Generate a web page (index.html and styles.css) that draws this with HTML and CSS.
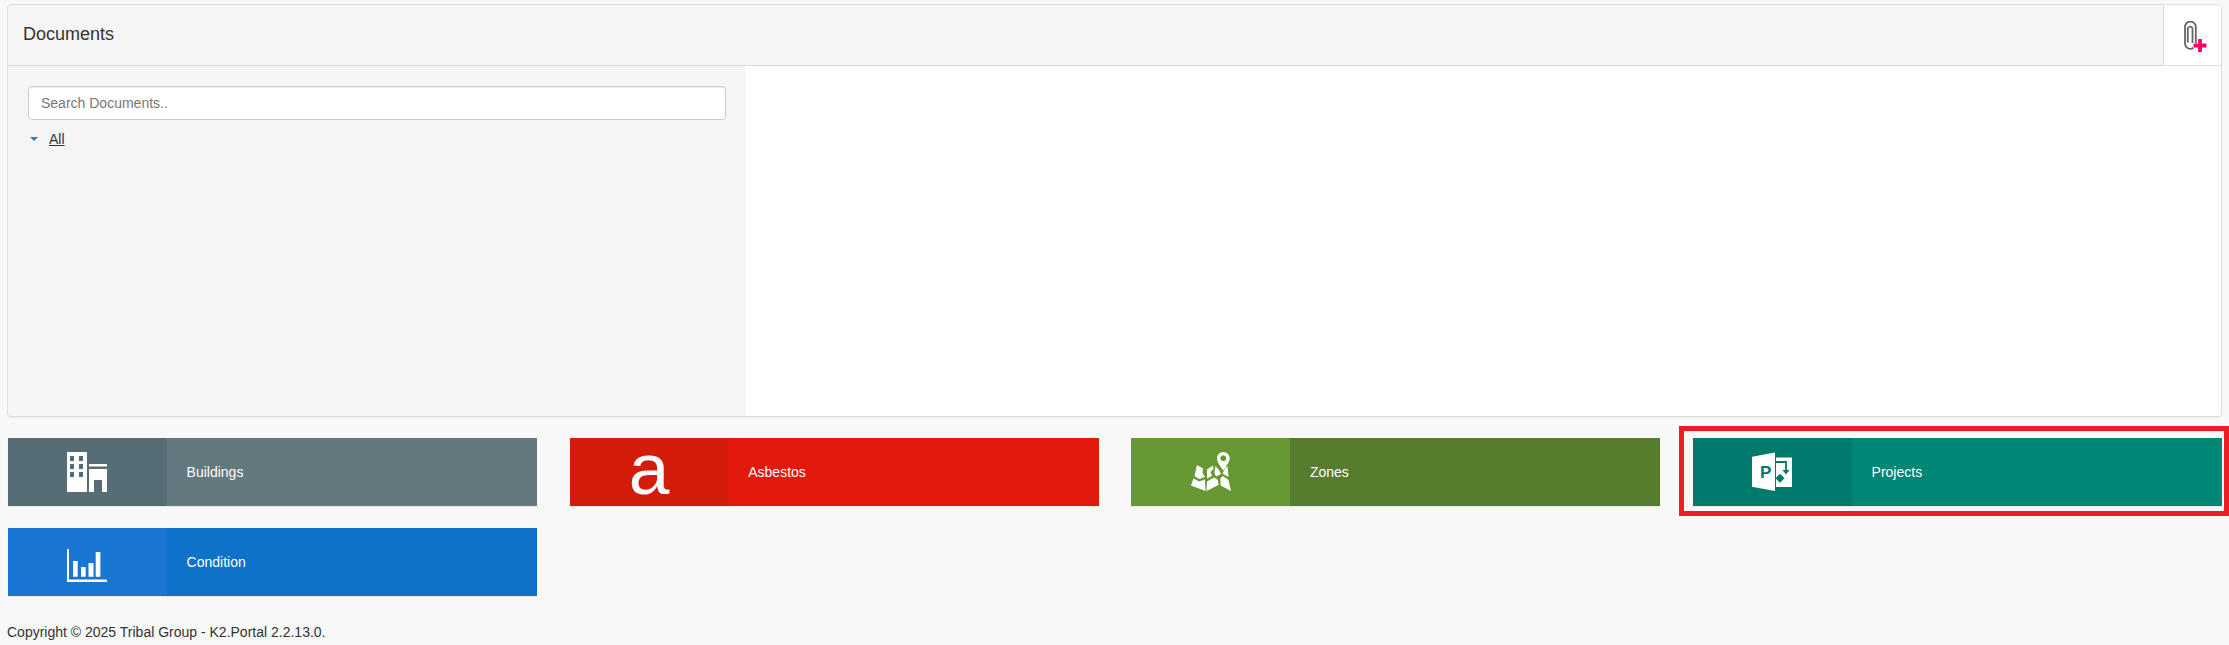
FILE: index.html
```html
<!DOCTYPE html>
<html lang="en">
<head>
<meta charset="utf-8">
<title>Documents</title>
<link rel="stylesheet" href="styles.css">
</head>
<body>
<div class="page">
  <section class="panel">
    <header class="panel-head">
      <h2 class="panel-title">Documents</h2>
      <button class="attach" type="button" aria-label="Add document">
        <svg class="attach-icon" width="24" height="33" viewBox="0 0 24 33">
          <path d="M12.800 22V6a5.400 5.400 0 0 0-10.800 0v16.500a5.400 5.400 0 0 0 8.500 4.300M9.500 22V7.500a2.400 2.400 0 0 0-4.700 0V21.500" fill="none" stroke="#666" stroke-width="1.800"/>
          <path d="M10.500 24.500H23.500M17 18V31" fill="none" stroke="#ff0066" stroke-width="3.800"/>
        </svg>
      </button>
    </header>
    <div class="panel-body">
      <aside class="tree">
        <input class="search" type="text" placeholder="Search Documents..">
        <div class="tree-row"><span class="caret"></span><a class="tree-link" href="#">All</a></div>
      </aside>
      <div class="viewer"></div>
    </div>
  </section>

  <nav class="tiles">
    <a class="tile tile-buildings" href="#">
      <span class="tile-icon">
        <svg width="40" height="40" viewBox="0 0 40 40">
          <path fill="#fff" fill-rule="evenodd" d="M0 0H20V40H0ZM3 4V9H7V4ZM12 4V9H16V4ZM3 12V17H7V12ZM12 12V17H16V12ZM3 20V25H7V20ZM12 20V25H16V20Z"/>
          <path fill="#fff" fill-rule="evenodd" d="M22 12H40V14.500H22ZM22 17H40V40H35V28H27V40H22Z"/>
        </svg>
      </span>
      <span class="tile-label">Buildings</span>
    </a>
    <a class="tile tile-asbestos" href="#">
      <span class="tile-icon"><span class="letter-icon">a</span></span>
      <span class="tile-label">Asbestos</span>
    </a>
    <a class="tile tile-zones" href="#">
      <span class="tile-icon">
        <svg width="40" height="40" viewBox="0 0 40 40">
          <path fill="#fff" fill-rule="evenodd" d="M32.300 0a6.300 6.300 0 0 1 6.300 6.300C38.600 10 35 14.500 32.300 18.500 29.500 14.500 26 10 26 6.300A6.300 6.300 0 0 1 32.300 0ZM32.300 3.300a3 3 0 1 0 .01 0Z"/>
          <path fill="#fff" d="M6 13 12 16.500 11.500 21 14 25 8 27 3.500 24ZM2.500 26.500 8 29.500 14 27.500 14.500 39 0 33.500ZM16 17.500 22 13.500 22.500 17 19.500 20 21 24 16 26.500ZM16 29.500 23 25.500 27 28 27.500 33 15.500 39ZM24.500 14 28 18 30 22 25 24.500 23.500 21ZM29.500 26 32 24 37.500 28 40 39 29.500 33.500ZM34.500 15.500 36.500 14.500 37.500 25 31.500 21.500Z"/>
        </svg>
      </span>
      <span class="tile-label">Zones</span>
    </a>
    <a class="tile tile-projects" href="#">
      <span class="tile-icon">
        <svg width="40" height="40" viewBox="0 0 40 40">
          <path fill="#fff" d="M0 4.700 23 .5V39L0 34.700Z"/>
          <path fill="#fff" d="M24 5.500H40V35H24Z"/>
          <path fill="none" stroke="#007a6a" stroke-width="1.800" d="M24 10H34V19"/>
          <path fill="#007a6a" d="M30.500 18H37.500L34 22.500Z"/>
          <path fill="#007a6a" d="M28 21.800 32.500 26.300 28 30.800 23.500 26.300Z"/>
          <text class="project-p" x="8" y="26">P</text>
        </svg>
      </span>
      <span class="tile-label">Projects</span>
      <span class="highlight"></span>
    </a>
    <a class="tile tile-condition" href="#">
      <span class="tile-icon">
        <svg width="40" height="40" viewBox="0 0 40 40">
          <path fill="#fff" d="M0 7H2V37.500H40V40H0Z"/>
          <path fill="#fff" d="M6 19H10.700V34.700H6ZM14 25H18.700V34.700H14ZM21.500 21H26.500V34.700H21.500ZM28.700 10H33.400V34.700H28.700Z"/>
        </svg>
      </span>
      <span class="tile-label">Condition</span>
    </a>
  </nav>

  <footer class="copyright">Copyright © 2025 Tribal Group - K2.Portal 2.2.13.0.</footer>
</div>
</body>
</html>
```
FILE: styles.css
```css
* { box-sizing: border-box; }

html, body {
  margin: 0;
  height: 645px;
  overflow: hidden;
  background: #f8f8f8;
  font-family: "Liberation Sans", Arial, sans-serif;
  font-size: 14px;
  line-height: 20px;
  color: #333;
}

.page { padding: 4px 7px 0; }

.panel {
  height: 413px;
  display: flex;
  flex-direction: column;
  background: #fff;
  border: 1px solid #ddd;
  border-radius: 4px;
  box-shadow: 0 1px 1px rgba(0, 0, 0, .05);
  overflow: hidden;
}

.panel-head {
  flex: none;
  height: 61px;
  padding-bottom: 2px;
  display: flex;
  align-items: center;
  justify-content: space-between;
  background: #f5f5f5;
  border-bottom: 1px solid #ddd;
}

.panel-title {
  margin: 0 0 0 15px;
  font-size: 18px;
  font-weight: 400;
  color: #333;
}

.attach {
  width: 58px;
  height: 60px;
  margin-bottom: -2px;
  padding: 4px 0 0 4px;
  background: #fff;
  border: 0;
  border-left: 1px solid #ddd;
  display: flex;
  align-items: center;
  justify-content: center;
}

.panel-body { flex: 1; display: flex; min-height: 0; }

.tree {
  width: 738px;
  padding: 20px 20px 0;
  background: #f5f5f5;
}

.search {
  display: block;
  width: 698px;
  height: 34px;
  padding: 6px 12px;
  font: 14px/20px "Liberation Sans", Arial, sans-serif;
  color: #555;
  background: #fff;
  border: 1px solid #ccc;
  border-radius: 4px;
  box-shadow: inset 0 1px 1px rgba(0, 0, 0, .075);
}
.search::placeholder { color: #777; opacity: 1; }

.tree-row {
  display: flex;
  align-items: center;
  margin-top: 9px;
  height: 20px;
}

.caret {
  width: 0;
  height: 0;
  margin: 0 11px 0 2px;
  border-left: 4px solid transparent;
  border-right: 4px solid transparent;
  border-top: 4px solid #337ab7;
}

.tree-link { color: #333; text-decoration: underline; }

.viewer { flex: 1; background: #fff; }

.tiles {
  display: grid;
  grid-template-columns: repeat(4, 529px);
  column-gap: 32.67px;
  row-gap: 22px;
  margin: 21px 0 0 1px;
}

.tile {
  position: relative;
  height: 68px;
  display: flex;
  align-items: center;
  color: #fff;
  text-decoration: none;
  box-shadow: 0 1px 1px rgba(0, 0, 0, .06);
}

.tile-icon {
  flex: none;
  width: 158.6px;
  height: 100%;
  display: flex;
  align-items: center;
  justify-content: center;
}

.tile-icon svg { display: block; }

.tile-label { padding-left: 20px; }

.letter-icon {
  font-size: 73px;
  line-height: 68px;
  height: 68px;
  margin: -7px 0 0 0;
}

.project-p {
  font-family: "Liberation Sans", Arial, sans-serif;
  font-weight: 700;
  font-size: 17px;
  fill: #007a6a;
}

.tile-buildings { background: #63787f; }
.tile-buildings .tile-icon { background: #566d76; }
.tile-asbestos { background: #e11a0c; }
.tile-asbestos .tile-icon { background: #d41c0a; }
.tile-zones { background: #587c2d; }
.tile-zones .tile-icon { background: #689834; }
.tile-projects { background: #008675; }
.tile-projects .tile-icon { background: #007a6a; }
.tile-condition { background: #0d72c8; }
.tile-condition .tile-icon { background: #1976d2; }

.highlight {
  position: absolute;
  top: -12px;
  right: -7px;
  bottom: -10px;
  left: -14px;
  border: 5px solid #ee1c25;
  pointer-events: none;
}

.copyright { margin-top: 26px; }
```
